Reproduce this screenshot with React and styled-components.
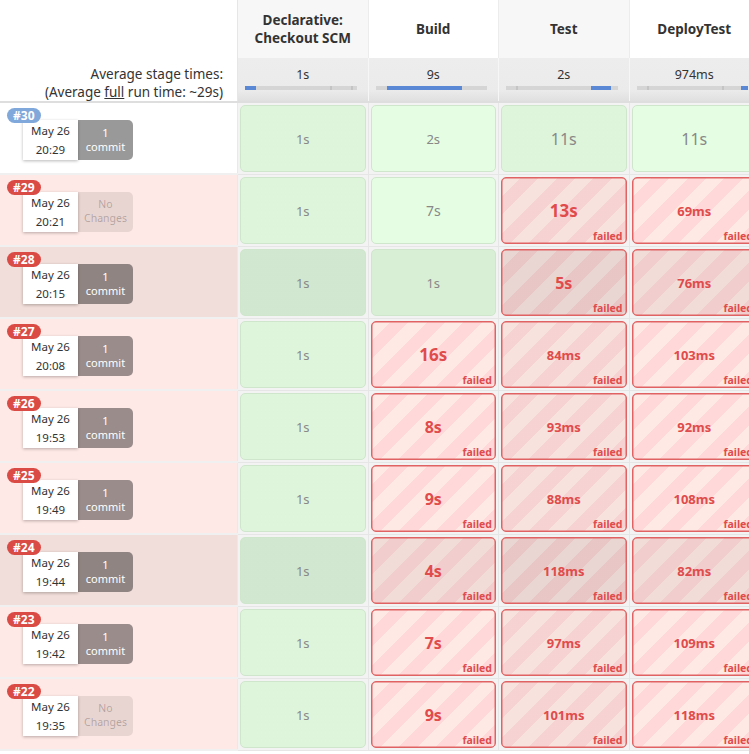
import React from 'react';
import styled, { createGlobalStyle } from 'styled-components';

const Global = createGlobalStyle`
  html, body { margin: 0; padding: 0; background: #fff; overflow: hidden; }
  body { font-family: "Noto Sans", "Open Sans", sans-serif; color: #333; }
`;

const COLS = '238px repeat(4, 130.5px)';

const Table = styled.div`
  width: 760px;
  display: flex;
  flex-direction: column;
`;

const Head = styled.div`
  display: grid;
  grid-template-columns: ${COLS};
  grid-template-rows: 58px 43px;
  border-bottom: 2px solid #dedede;
`;

const Corner = styled.div`
  grid-row: 1 / 3;
  grid-column: 1;
  display: flex;
  flex-direction: column;
  justify-content: flex-end;
  align-items: flex-end;
  padding: 0 15px 0 0;
  font-size: 13.5px;
  line-height: 18px;
  color: #333;
  background: #fff;
  box-shadow: inset -1px 0 0 #e6e6e6;
`;

const Full = styled.span`
  text-decoration: underline;
`;

const StageName = styled.div`
  grid-row: 1;
  display: flex;
  align-items: center;
  justify-content: center;
  text-align: center;
  font-weight: 700;
  font-size: 13.5px;
  line-height: 18px;
  color: #333;
  background: ${p => (p.$odd ? '#f7f7f7' : '#ffffff')};
  border-right: 1px solid #ececec;
`;

const AvgCell = styled.div`
  grid-row: 2;
  display: flex;
  flex-direction: column;
  padding-top: 9px;
  background: linear-gradient(#ededed 0%, #ebebeb 75%, #e0e0e0 100%);
  border-right: 1px solid #f6f6f6;
  font-size: 12.5px;
  line-height: 16px;
  text-align: center;
  color: #333;
`;

const Bar = styled.div`
  position: relative;
  height: 4px;
  margin: 3px 11px 0 7px;
  background: #d5d5d5;
  overflow: hidden;
`;

const Fill = styled.div`
  position: absolute;
  top: 0;
  bottom: 0;
  background: #5a88d5;
`;

const Tick = styled.div`
  position: absolute;
  top: 0;
  bottom: 0;
  width: 2px;
  background: #c4c4c4;
`;

const Row = styled.div`
  display: grid;
  grid-template-columns: ${COLS};
  height: 72px;
`;

const RunCell = styled.div`
  position: relative;
  background: ${p => (p.$tone === 'ok' ? '#ffffff' : p.$dark ? '#f1ddd9' : '#ffe9e6')};
  border-bottom: 2px solid #f0f0f0;
  box-sizing: border-box;
  box-shadow: inset -1px 0 0 #e9e9e9;
`;

const Badge = styled.div`
  position: absolute;
  left: 7px;
  top: 5px;
  z-index: 2;
  height: 15px;
  padding: 0 6px;
  border-radius: 8px;
  background: ${p => (p.$tone === 'ok' ? '#80a8da' : '#da4b45')};
  color: #fff;
  font-weight: 700;
  font-size: 12px;
  line-height: 15px;
`;

const Info = styled.div`
  display: flex;
  margin: 17px 0 0 23px;
  height: 40px;
`;

const DateBox = styled.div`
  width: 55px;
  height: 40px;
  background: #fff;
  box-shadow: 0 1px 3px rgba(0, 0, 0, 0.28);
  display: flex;
  flex-direction: column;
  align-items: center;
  justify-content: center;
  font-size: 11.5px;
  line-height: 19px;
  color: #333;
`;

const Changes = styled.div`
  width: 55px;
  height: 40px;
  border-radius: 0 5px 5px 0;
  background: ${p => (p.$none ? 'rgba(0,0,0,0.09)' : 'rgba(0,0,0,0.4)')};
  color: ${p => (p.$none ? 'rgba(0,0,0,0.24)' : '#fff')};
  display: flex;
  flex-direction: column;
  align-items: center;
  justify-content: center;
  font-size: ${p => (p.$none ? '10.5px' : '11px')};
  line-height: 14px;
  padding-bottom: ${p => (p.$none ? '3px' : '0')};
  box-sizing: border-box;
`;

const StageCell = styled.div`
  background: #f3f3f3;
  border-right: 1px solid #e6e6e6;
  border-bottom: 1px solid #e6e6e6;
  padding: 2px;
  box-sizing: border-box;
  display: flex;
`;

const shade = p => {
  const a = (p.$odd ? 0.03 : 0) + (p.$dark ? 0.055 : 0);
  return `linear-gradient(rgba(0,0,0,${a}), rgba(0,0,0,${a}))`;
};

const Box = styled.div`
  position: relative;
  flex: 1;
  border-radius: 5px;
  display: flex;
  align-items: center;
  justify-content: center;
  box-sizing: border-box;
  border: 1px solid ${p => (p.$fail ? '#e06262' : '#cfe6cc')};
  box-shadow: ${p => (p.$fail ? 'inset 0 0 0 0.5px #e06262' : 'none')};
  background: ${p =>
    p.$fail
      ? `${shade(p)}, repeating-linear-gradient(135deg, #ffe9e5 0px, #ffe9e5 13px, #ffd9d9 13px, #ffd9d9 26px)`
      : `${shade(p)}, #e5fde2`};
  color: ${p => (p.$fail ? '#e04b4b' : '#888')};
  font-weight: ${p => (p.$fail ? 700 : 400)};
  font-size: ${p => p.$size}px;
`;

const Failed = styled.span`
  position: absolute;
  right: 3px;
  bottom: 1px;
  font-size: 10.5px;
  font-weight: 700;
  line-height: 12px;
  color: #e04b4b;
`;

const stages = [
  { name: ['Declarative:', 'Checkout SCM'], avg: '1s', fill: [0, 11], ticks: [85, 106] },
  { name: ['Build'], avg: '9s', fill: [11, 75], ticks: [] },
  { name: ['Test'], avg: '2s', fill: [85, 20], ticks: [10] },
  { name: ['DeployTest'], avg: '974ms', fill: [104, 12], ticks: [10, 85] },
];

const runs = [
  { id: 30, tone: 'ok', time: '20:29', c: 1, cells: [['1s', 13], ['2s', 13], ['11s', 16], ['11s', 16]] },
  { id: 29, time: '20:21', c: 0, cells: [['1s', 13], ['7s', 14], ['13s', 17, 1], ['69ms', 13, 1]] },
  { id: 28, dark: true, time: '20:15', c: 1, cells: [['1s', 13], ['1s', 13], ['5s', 16, 1], ['76ms', 13, 1]] },
  { id: 27, time: '20:08', c: 1, cells: [['1s', 13], ['16s', 17, 1], ['84ms', 13, 1], ['103ms', 13, 1]] },
  { id: 26, time: '19:53', c: 1, cells: [['1s', 13], ['8s', 16, 1], ['93ms', 13, 1], ['92ms', 13, 1]] },
  { id: 25, time: '19:49', c: 1, cells: [['1s', 13], ['9s', 16, 1], ['88ms', 13, 1], ['108ms', 13, 1]] },
  { id: 24, dark: true, time: '19:44', c: 1, cells: [['1s', 13], ['4s', 16, 1], ['118ms', 13, 1], ['82ms', 13, 1]] },
  { id: 23, time: '19:42', c: 1, cells: [['1s', 13], ['7s', 16, 1], ['97ms', 13, 1], ['109ms', 13, 1]] },
  { id: 22, time: '19:35', c: 0, cells: [['1s', 13], ['9s', 16, 1], ['101ms', 13, 1], ['118ms', 13, 1]] },
];

export default function App() {
  return (
    <>
      <Global />
      <Table>
        <Head>
          <Corner>
            <div>Average stage times:</div>
            <div>
              (Average <Full>full</Full> run time: ~29s)
            </div>
          </Corner>
          {stages.map((s, i) => (
            <StageName key={'n' + i} $odd={i % 2 === 0} style={{ gridColumn: i + 2 }}>
              <div>
                {s.name.map(l => (
                  <div key={l}>{l}</div>
                ))}
              </div>
            </StageName>
          ))}
          {stages.map((s, i) => (
            <AvgCell key={'a' + i} style={{ gridColumn: i + 2 }}>
              <div>{s.avg}</div>
              <Bar>
                {s.ticks.map(t => (
                  <Tick key={t} style={{ left: t }} />
                ))}
                <Fill style={{ left: s.fill[0], width: s.fill[1] }} />
              </Bar>
            </AvgCell>
          ))}
        </Head>
        {runs.map(r => (
          <Row key={r.id}>
            <RunCell $tone={r.tone} $dark={r.dark}>
              <Badge $tone={r.tone}>#{r.id}</Badge>
              <Info>
                <DateBox>
                  <div>May 26</div>
                  <div>{r.time}</div>
                </DateBox>
                <Changes $none={!r.c}>
                  {r.c ? (
                    <>
                      <div>1</div>
                      <div>commit</div>
                    </>
                  ) : (
                    <>
                      <div>No</div>
                      <div>Changes</div>
                    </>
                  )}
                </Changes>
              </Info>
            </RunCell>
            {r.cells.map(([t, size, fail], i) => (
              <StageCell key={i}>
                <Box $fail={!!fail} $odd={i % 2 === 0} $dark={r.dark} $size={size}>
                  {t}
                  {fail ? <Failed>failed</Failed> : null}
                </Box>
              </StageCell>
            ))}
          </Row>
        ))}
      </Table>
    </>
  );
}
